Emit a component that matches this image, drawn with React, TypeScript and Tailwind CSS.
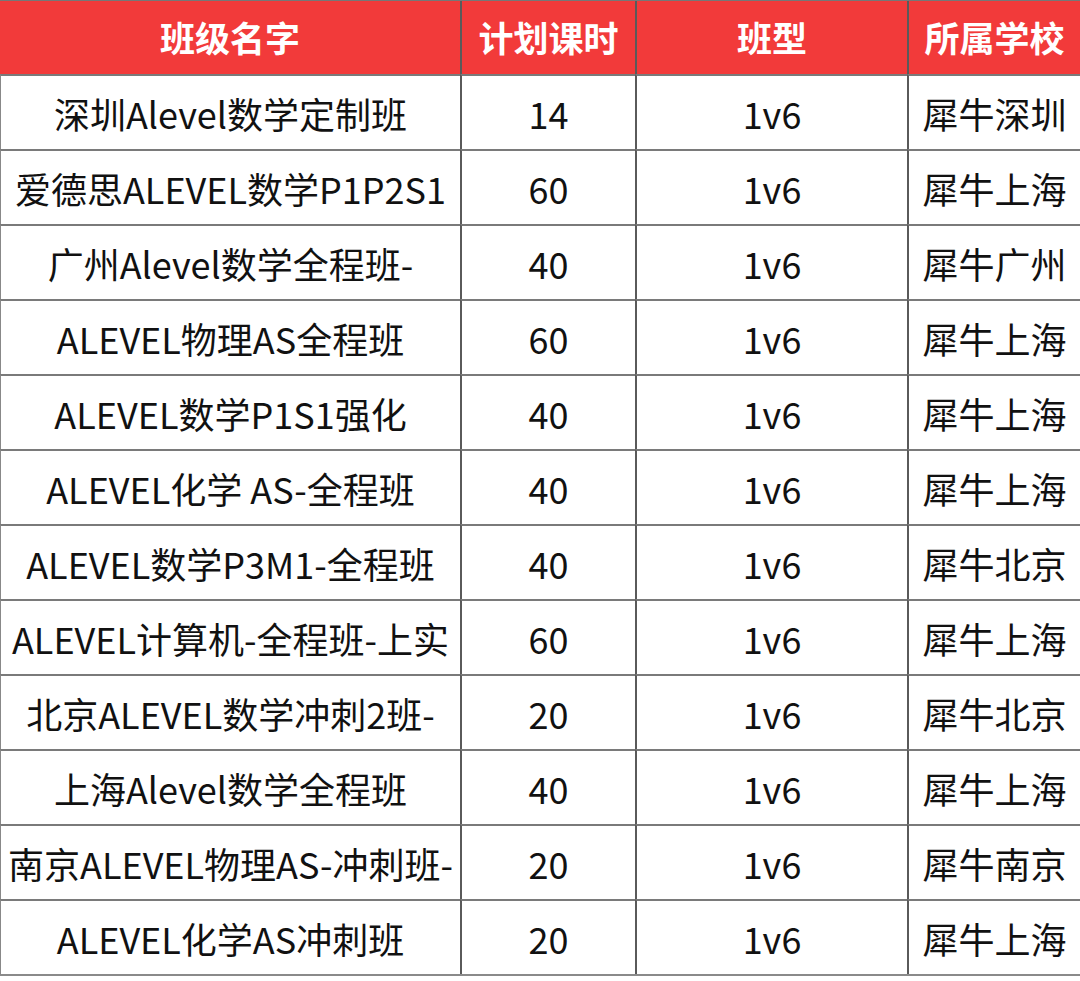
const rows: [string, string, string, string][] = [
  ["深圳Alevel数学定制班", "14", "1v6", "犀牛深圳"],
  ["爱德思ALEVEL数学P1P2S1", "60", "1v6", "犀牛上海"],
  ["广州Alevel数学全程班-", "40", "1v6", "犀牛广州"],
  ["ALEVEL物理AS全程班", "60", "1v6", "犀牛上海"],
  ["ALEVEL数学P1S1强化", "40", "1v6", "犀牛上海"],
  ["ALEVEL化学 AS-全程班", "40", "1v6", "犀牛上海"],
  ["ALEVEL数学P3M1-全程班", "40", "1v6", "犀牛北京"],
  ["ALEVEL计算机-全程班-上实", "60", "1v6", "犀牛上海"],
  ["北京ALEVEL数学冲刺2班-", "20", "1v6", "犀牛北京"],
  ["上海Alevel数学全程班", "40", "1v6", "犀牛上海"],
  ["南京ALEVEL物理AS-冲刺班-", "20", "1v6", "犀牛南京"],
  ["ALEVEL化学AS冲刺班", "20", "1v6", "犀牛上海"],
];

const headers = ["班级名字", "计划课时", "班型", "所属学校"];

export default function App() {
  return (
    <div className="min-h-[981px] w-[1080px] bg-white font-['Noto_Sans_CJK_SC',sans-serif]">
      <div className="grid grid-cols-[460px_175px_272px_173px] border-t border-[#777] border-b-2 border-b-[#8a8a8a]">
        {headers.map((h, i) => (
          <div
            key={h}
            className={`flex h-[73px] items-center justify-center whitespace-nowrap bg-[#f23a3a] text-[35px] font-bold text-white ${
              i > 0 ? "border-l-2 border-[#5a5a5a]" : ""
            }`}
          >
            {h}
          </div>
        ))}
        {rows.map((r, ri) =>
          r.map((c, ci) => (
            <div
              key={`${ri}-${ci}`}
              className={`flex h-[75px] items-center justify-center whitespace-nowrap border-t-2 border-t-[#7a7a7a] text-[36px] text-[#111] ${
                ci > 0 ? "border-l-2 border-l-[#5a5a5a]" : "border-l border-l-[#888]"
              } ${ri === 0 ? "border-t-0" : ""}`}
            >
              {c}
            </div>
          ))
        )}
      </div>
    </div>
  );
}
